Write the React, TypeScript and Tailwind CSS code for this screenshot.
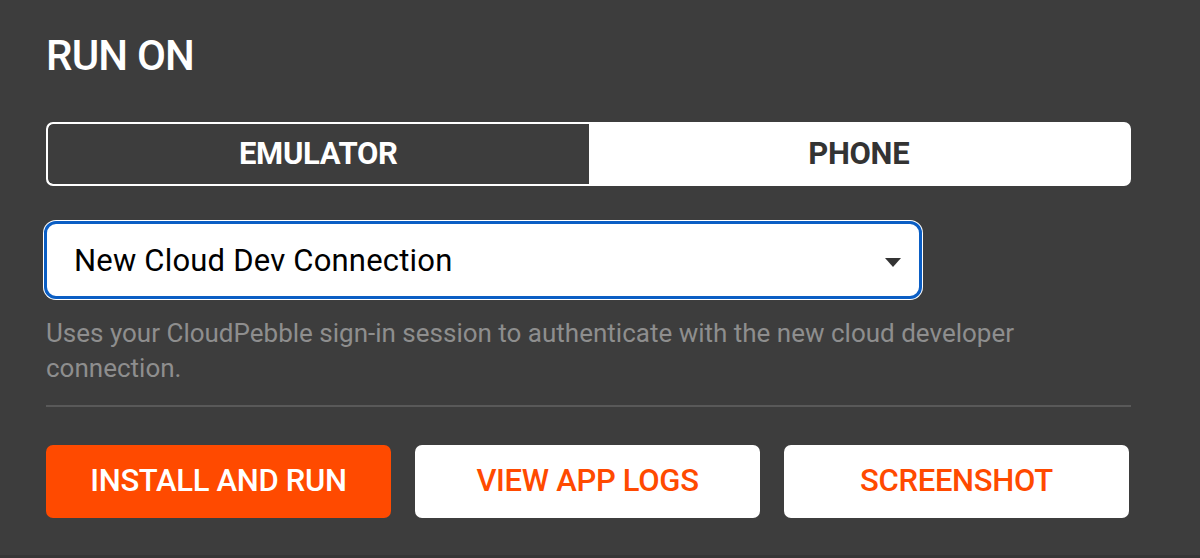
import { useState } from "react"

const FONT = "font-['Roboto','Liberation_Sans',sans-serif]"

export default function App() {
    const [target, setTarget] = useState<"emulator" | "phone">("emulator")

    return (
        <div className={`min-h-[558px] w-[1200px] bg-[#3d3d3d] border-b-[3px] border-[#363636] ${FONT}`}>
            <div className="px-[46px] pt-[34px] w-[1177px]">
                <h2 className="text-[42px] leading-[44px] text-white font-medium tracking-[-0.8px]">RUN ON</h2>

                {/* Selector emulador / teléfono */}
                <div className="mt-[44px] flex h-[64px] rounded-[7px] border-[2px] border-white bg-white overflow-hidden">
                    <button
                        onClick={() => setTarget("emulator")}
                        className={`flex-1 text-[31px] font-bold tracking-[-0.3px] ${target === "emulator" ? "bg-[#3d3d3d] text-white rounded-l-[5px]" : "bg-white text-[#333]"}`}
                    >
                        EMULATOR
                    </button>
                    <button
                        onClick={() => setTarget("phone")}
                        className={`flex-1 text-[31px] font-bold tracking-[-0.3px] ${target === "phone" ? "bg-[#3d3d3d] text-white rounded-r-[5px]" : "bg-white text-[#333]"}`}
                    >
                        PHONE
                    </button>
                </div>

                {/* Conexión */}
                <div className="mt-[35px] -ml-[2px] relative w-[878px] h-[78px] rounded-[12px] border-[3px] border-[#0b5ec4] bg-white ring-1 ring-white flex items-center">
                    <span className="pl-[27px] pt-[3px] text-[31px] text-black tracking-[0.2px]">New Cloud Dev Connection</span>
                    <svg className="absolute right-[18px] top-[34px]" width="16" height="9" viewBox="0 0 16 9">
                        <path d="M0 0 L16 0 L8 9 Z" fill="#333" />
                    </svg>
                </div>

                <p className="mt-[17px] max-w-[1040px] text-[26px] leading-[35px] text-[#8e8e8e]">
                    Uses your CloudPebble sign-in session to authenticate with the new cloud developer connection.
                </p>

                <div className="mt-[19px] h-[2px] bg-[#595959]" />

                <div className="mt-[38px] flex gap-[24px] pr-[2px]">
                    <button className="flex-1 h-[73px] rounded-[7px] bg-[#ff4a00] text-white text-[31px] font-medium tracking-[-0.3px]">
                        INSTALL AND RUN
                    </button>
                    <button className="flex-1 h-[73px] rounded-[7px] bg-white text-[#ff4a00] text-[31px] font-medium tracking-[-0.3px]">
                        VIEW APP LOGS
                    </button>
                    <button className="flex-1 h-[73px] rounded-[7px] bg-white text-[#ff4a00] text-[31px] font-medium tracking-[-0.3px]">
                        SCREENSHOT
                    </button>
                </div>
            </div>
        </div>
    )
}
